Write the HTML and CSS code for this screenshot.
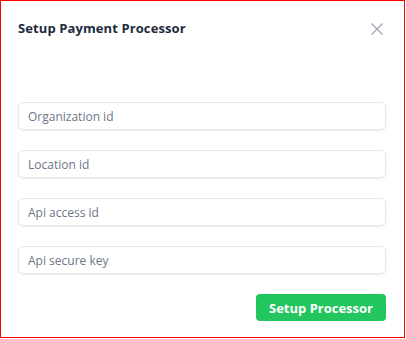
FILE: index.html
```html
<!DOCTYPE html>
<html lang="en">
<head>
    <meta charset="UTF-8">
    <meta name="viewport" content="width=device-width, initial-scale=1.0">
    <title>Setup Payment Processor</title>
    <link rel="stylesheet" href="styles.css">
</head>
<body>
    <div class="modal">
        <div class="modal-header">
            <h2 class="modal-title">Setup Payment Processor</h2>
            <button type="button" class="close-btn" aria-label="Close">
                <svg width="12" height="12" viewBox="0 0 12 12">
                    <path d="M0.5 0.5 L11.5 11.5 M11.5 0.5 L0.5 11.5" stroke="#9ca3af" stroke-width="1.2" fill="none"/>
                </svg>
            </button>
        </div>

        <form class="modal-form" id="processorForm">
            <input type="text" class="field" placeholder="Organization id">
            <input type="text" class="field" placeholder="Location id">
            <input type="text" class="field" placeholder="Api access id">
            <input type="text" class="field" placeholder="Api secure key">
            <div class="actions">
                <button type="submit" class="submit-btn">Setup Processor</button>
            </div>
        </form>
    </div>
</body>
</html>
```

FILE: styles.css
```css
/* reset */
* {
    margin: 0;
    padding: 0;
    box-sizing: border-box;
}

body {
    font-family: "Open Sans", "Liberation Sans", sans-serif;
    background-color: #fff;
    color: #1e293b;
}

/* okno dialogu */
.modal {
    width: 405px;
    height: 338px;
    border: 1px solid #ff0000;
    padding: 0 18px 0 17px;
    background-color: #fff;
}

.modal-header {
    display: flex;
    justify-content: space-between;
    align-items: center;
    height: 54px;
    padding-bottom: 1px;
}

.modal-title {
    font-size: 13px;
    font-weight: 700;
    color: #1e2b40;
    letter-spacing: 0.1px;
}

.close-btn {
    background: none;
    border: none;
    width: 12px;
    height: 12px;
    margin-right: 3px;
    margin-top: 3px;
    cursor: pointer;
    display: flex;
}

/* formular */
.modal-form {
    display: flex;
    flex-direction: column;
    gap: 20px;
    margin-top: 47px;
}

.field {
    width: 100%;
    height: 28px;
    padding: 0 9px;
    border: 1px solid #e5e7eb;
    border-radius: 5px;
    box-shadow: 0 1px 2px rgba(0, 0, 0, 0.07);
    font-family: inherit;
    font-size: 12px;
    color: #334155;
    outline: none;
}

.field::placeholder {
    color: #6b7689;
}

.actions {
    display: flex;
    justify-content: flex-end;
}

.submit-btn {
    width: 130px;
    height: 27px;
    background-color: #22c55e;
    color: #fff;
    border: none;
    border-radius: 4px;
    font-family: inherit;
    font-size: 13px;
    font-weight: 700;
    cursor: pointer;
}

.submit-btn:hover {
    background-color: #16a34a;
}
```
